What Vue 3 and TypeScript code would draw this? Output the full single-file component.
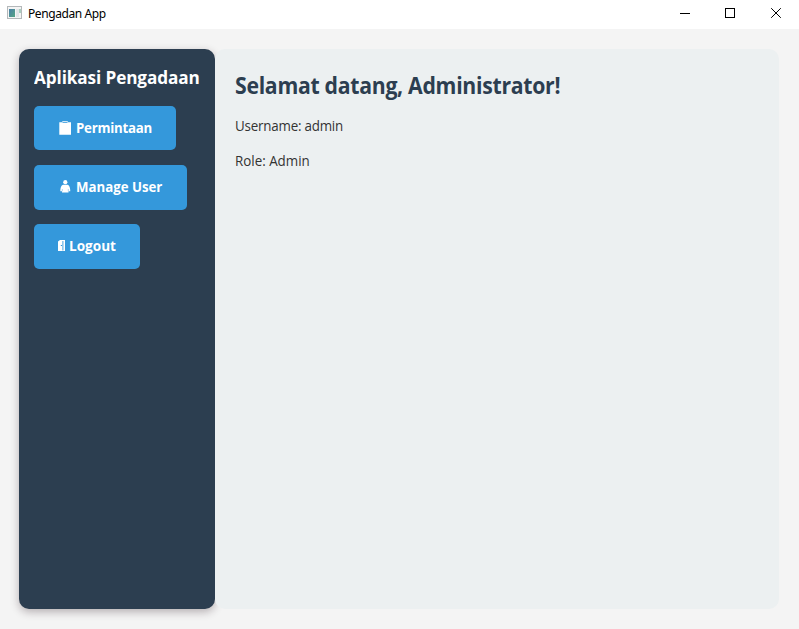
<script setup lang="ts">
interface MenuItem {
  id: 'request' | 'users' | 'logout'
  label: string
}

const menu: MenuItem[] = [
  { id: 'request', label: 'Permintaan' },
  { id: 'users', label: 'Manage User' },
  { id: 'logout', label: 'Logout' },
]

const user = { name: 'Administrator', username: 'admin', role: 'Admin' }
</script>

<template>
  <div class="window">
    <header class="titlebar">
      <svg class="app-icon" width="16" height="14" viewBox="0 0 16 14">
        <defs>
          <linearGradient id="pane" x1="0" y1="0" x2="1" y2="1">
            <stop offset="0" stop-color="#4a7fa8" />
            <stop offset="1" stop-color="#55a583" />
          </linearGradient>
        </defs>
        <rect x="0.5" y="0.5" width="14" height="12" fill="#f5f5f5" stroke="#b4b8ba" />
        <rect x="2" y="3" width="6" height="8" fill="url(#pane)" />
        <rect x="9" y="3" width="3" height="8" fill="#e2e5e8" />
        <rect x="12" y="3" width="2" height="4" fill="#a9cfc0" />
      </svg>
      <span class="app-name">Pengadan App</span>
      <div class="controls">
        <svg width="46" height="29" viewBox="0 0 46 29"><path d="M20 13.5h10" /></svg>
        <svg width="46" height="29" viewBox="0 0 46 29"><rect x="19.5" y="8.5" width="9" height="9" /></svg>
        <svg width="46" height="29" viewBox="0 0 46 29"><path d="M19.2 8.2l9.6 9.6M28.8 8.2l-9.6 9.6" /></svg>
      </div>
    </header>
    <main class="body">
      <nav class="sidebar">
        <h2 class="brand">Aplikasi Pengadaan</h2>
        <button v-for="item in menu" :key="item.id" type="button" class="item" :class="item.id">
          <svg v-if="item.id === 'request'" class="icon" width="13" height="14" viewBox="0 0 13 14">
            <path d="M0.300 1.300h3V.3h5.500v1H12v12.500H0.300z" fill="#fff" />
            <path d="M3.500 1.500h5" stroke="#3498db" stroke-width=".8" />
          </svg>
          <svg v-else-if="item.id === 'users'" class="icon" width="11" height="13" viewBox="0 0 11 13">
            <circle cx="5.300" cy="2.200" r="2.100" fill="#fff" />
            <path d="M3 4.800h4.600C9.500 5.300 10.300 8 10.300 11.300H8.500v1.200H2V11.300H.3C.3 8 1.100 5.300 3 4.800z" fill="#fff" />
            <path d="M2.300 9v2.300M8.300 9v2.300" stroke="#3498db" stroke-width=".4" />
          </svg>
          <svg v-else class="icon" width="7" height="12" viewBox="0 0 7 12">
            <path d="M0 1.500L2 0H7v11H0z" fill="#fff" />
            <path d="M4.900 1v9.500" stroke="#3498db" stroke-width=".9" />
            <path d="M2.800 5.500h1.200" stroke="#3498db" />
          </svg>
          <span class="label">{{ item.label }}</span>
        </button>
      </nav>
      <section class="content">
        <h1 class="welcome">Selamat datang, {{ user.name }}!</h1>
        <p class="info username">Username: {{ user.username }}</p>
        <p class="info role">Role: {{ user.role }}</p>
      </section>
    </main>
  </div>
</template>

<style>
body {
  margin: 0;
  overflow: hidden;
}
</style>

<style scoped>
.window {
  display: flex;
  flex-direction: column;
  width: 799px;
  height: 629px;
  background: #f4f4f4;
  font-family: "Open Sans", "Noto Sans", sans-serif;
}
.titlebar {
  display: flex;
  flex: none;
  height: 29px;
  background: #fff;
}
.app-icon {
  margin: 6px 5px 0 7px;
}
.app-name {
  font-family: "Noto Sans", sans-serif;
  font-size: 12px;
  line-height: 28px;
  letter-spacing: -0.4px;
  color: #000;
}
.controls {
  display: flex;
  margin-left: auto;
  margin-right: 1px;
}
.controls svg {
  fill: none;
  stroke: #000;
  stroke-width: 1;
}
.body {
  display: flex;
  flex: 1;
  padding: 20px 20px 20px 19px;
}
.sidebar {
  display: flex;
  flex-direction: column;
  align-items: flex-start;
  box-sizing: border-box;
  width: 196px;
  padding: 15px;
  border-radius: 10px;
  background: #2c3e50;
  box-shadow: 0 3px 8px rgba(40, 20, 30, 0.3);
}
.brand {
  margin: 1px 0 16px;
  font-size: 17.5px;
  line-height: 25px;
  font-weight: 700;
  transform: scaleX(0.98);
  transform-origin: left;
  letter-spacing: -0.1px;
  color: #fff;
  white-space: nowrap;
}
.item {
  display: flex;
  align-items: center;
  box-sizing: border-box;
  height: 45px;
  margin: 0 0 14px;
  padding: 0 0 0 25px;
  border: 0;
  border-radius: 5px;
  background: #3498db;
  color: #fff;
  font: 700 13.5px/20px "Open Sans", sans-serif;
  white-space: nowrap;
}
.label {
  transform: scaleX(0.98);
  transform-origin: left;
}
.request {
  width: 142px;
  height: 44px;
  margin-bottom: 15px;
}
.request .label {
  letter-spacing: -0.25px;
}
.users {
  width: 153px;
}
.users .label,
.logout .label {
  margin-top: -1px;
}
.logout {
  width: 106px;
  padding-left: 24px;
}
.logout .label {
  transform: scaleX(1.005);
}
.icon {
  flex: none;
  margin-right: 4px;
}
.users .icon {
  margin: -3px 5px 0 1px;
}
.logout .icon {
  margin: -2px 4px 0 0;
}
.content {
  position: relative;
  flex: 1;
  padding: 20px;
  border-radius: 10px;
  background: #ecf0f1;
}
.welcome {
  margin: 0 0 14px;
  padding-top: 1px;
  font-size: 22.5px;
  line-height: 32px;
  font-weight: 700;
  letter-spacing: -0.3px;
  transform: scaleX(0.943);
  transform-origin: left;
  color: #2c3e50;
  white-space: nowrap;
}
.info {
  margin: 0 0 15px;
  font-size: 14px;
  line-height: 20px;
  transform: scaleX(0.955);
  transform-origin: left;
  color: #333;
}
.username {
  letter-spacing: -0.22px;
}
</style>
